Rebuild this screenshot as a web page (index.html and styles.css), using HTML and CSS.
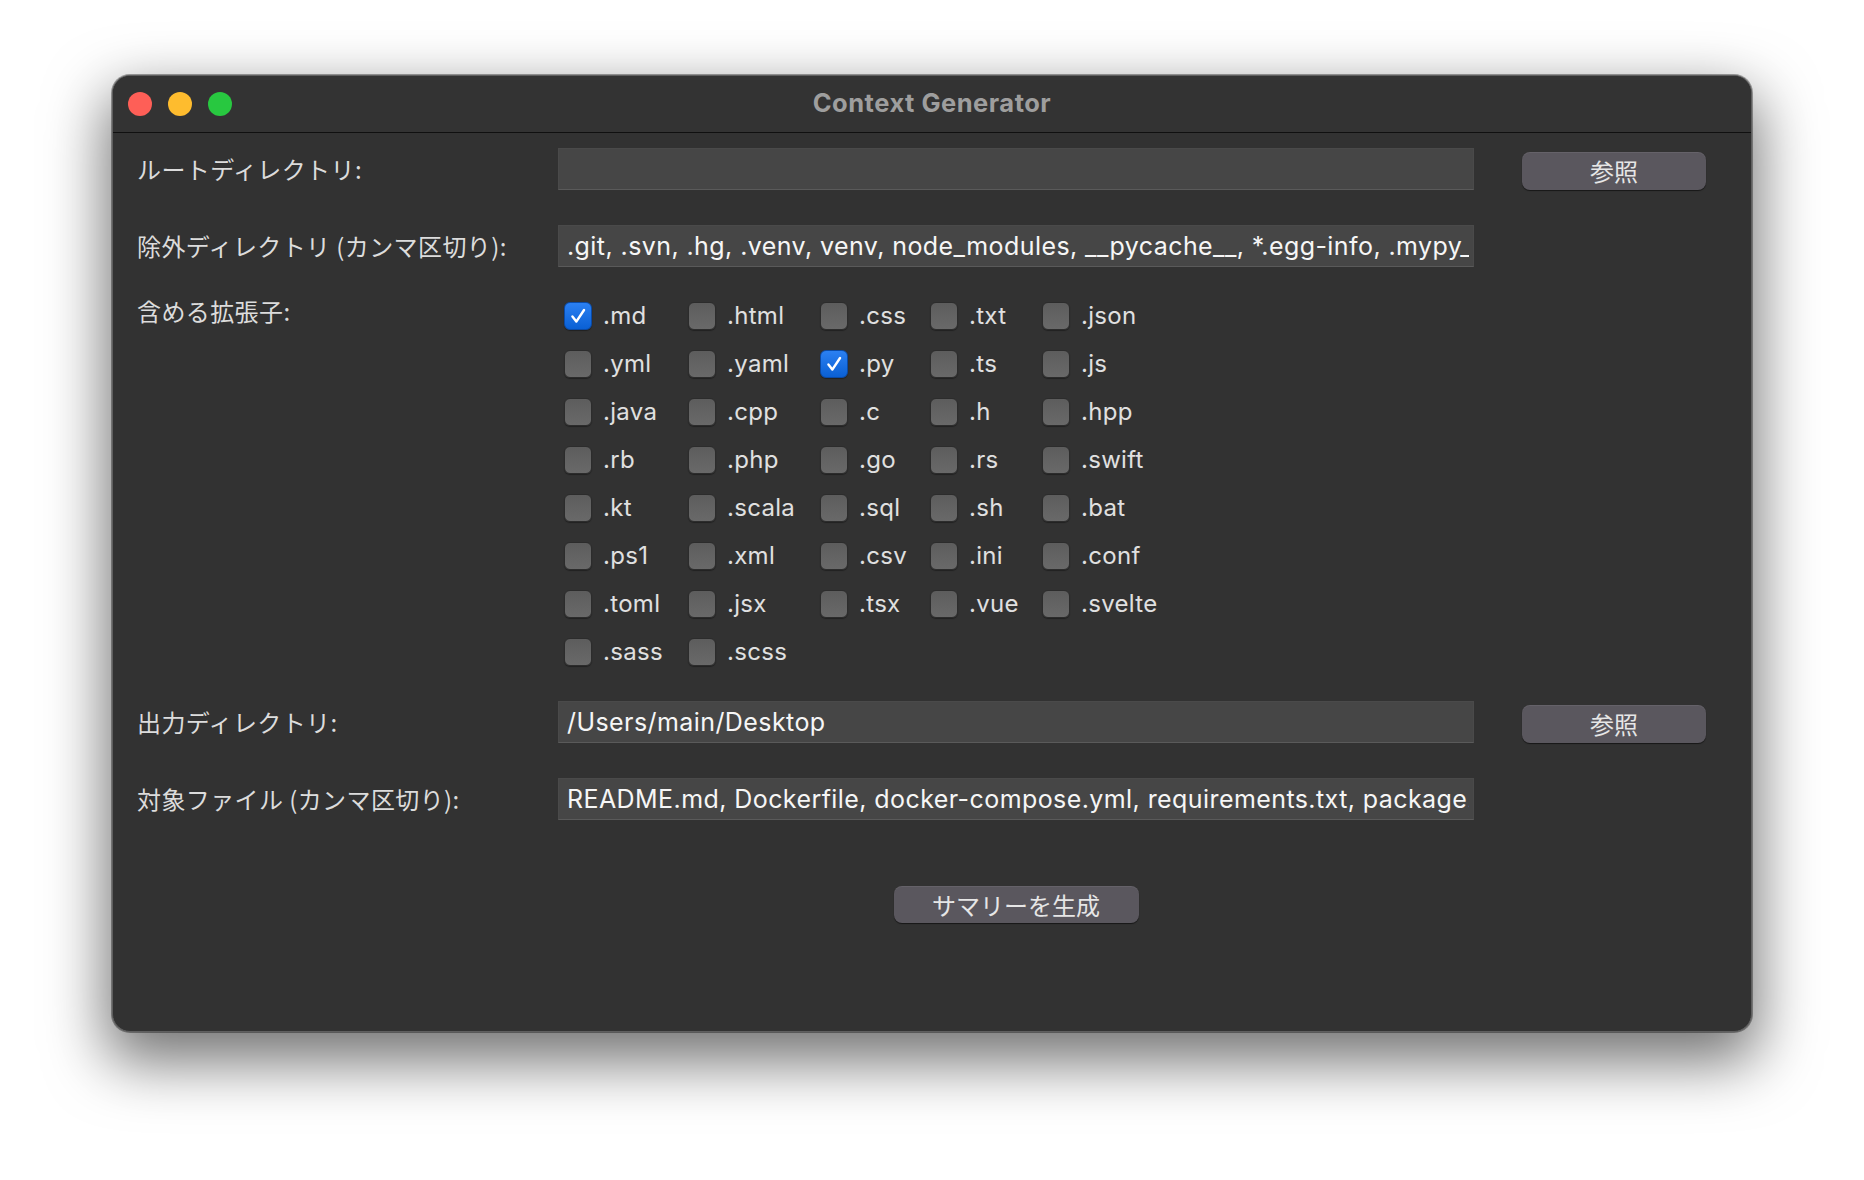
FILE: index.html
```html
<!DOCTYPE html>
<html lang="ja">
<head>
<meta charset="utf-8">
<title>Context Generator</title>
<link rel="stylesheet" href="styles.css">
</head>
<body>
<div class="window">
  <div class="titlebar">
    <div class="lights">
      <span class="light red"></span>
      <span class="light yellow"></span>
      <span class="light green"></span>
    </div>
    <div class="title">Context Generator</div>
    <div></div>
  </div>
  <div class="content">
    <div class="label">ルートディレクトリ:</div>
    <div class="field"><div class="field-text"></div></div>
    <button class="btn browse">参照</button>

    <div class="label">除外ディレクトリ (カンマ区切り):</div>
    <div class="field"><div class="field-text">.git, .svn, .hg, .venv, venv, node_modules, __pycache__, *.egg-info, .mypy_cache, .pytest_cache, dist, build</div></div>
    <div></div>

    <div class="label label-top">含める拡張子:</div>
    <div class="ext-grid">
      <div class="ext"><span class="cb checked"><svg viewBox="0 0 28 28"><path d="M8 14.5 L12.2 20 L20.5 7.5"/></svg></span><span class="ext-name">.md</span></div>
      <div class="ext"><span class="cb"></span><span class="ext-name">.html</span></div>
      <div class="ext"><span class="cb"></span><span class="ext-name">.css</span></div>
      <div class="ext"><span class="cb"></span><span class="ext-name">.txt</span></div>
      <div class="ext"><span class="cb"></span><span class="ext-name">.json</span></div>

      <div class="ext"><span class="cb"></span><span class="ext-name">.yml</span></div>
      <div class="ext"><span class="cb"></span><span class="ext-name">.yaml</span></div>
      <div class="ext"><span class="cb checked"><svg viewBox="0 0 28 28"><path d="M8 14.5 L12.2 20 L20.5 7.5"/></svg></span><span class="ext-name">.py</span></div>
      <div class="ext"><span class="cb"></span><span class="ext-name">.ts</span></div>
      <div class="ext"><span class="cb"></span><span class="ext-name">.js</span></div>

      <div class="ext"><span class="cb"></span><span class="ext-name">.java</span></div>
      <div class="ext"><span class="cb"></span><span class="ext-name">.cpp</span></div>
      <div class="ext"><span class="cb"></span><span class="ext-name">.c</span></div>
      <div class="ext"><span class="cb"></span><span class="ext-name">.h</span></div>
      <div class="ext"><span class="cb"></span><span class="ext-name">.hpp</span></div>

      <div class="ext"><span class="cb"></span><span class="ext-name">.rb</span></div>
      <div class="ext"><span class="cb"></span><span class="ext-name">.php</span></div>
      <div class="ext"><span class="cb"></span><span class="ext-name">.go</span></div>
      <div class="ext"><span class="cb"></span><span class="ext-name">.rs</span></div>
      <div class="ext"><span class="cb"></span><span class="ext-name">.swift</span></div>

      <div class="ext"><span class="cb"></span><span class="ext-name">.kt</span></div>
      <div class="ext"><span class="cb"></span><span class="ext-name">.scala</span></div>
      <div class="ext"><span class="cb"></span><span class="ext-name">.sql</span></div>
      <div class="ext"><span class="cb"></span><span class="ext-name">.sh</span></div>
      <div class="ext"><span class="cb"></span><span class="ext-name">.bat</span></div>

      <div class="ext"><span class="cb"></span><span class="ext-name">.ps1</span></div>
      <div class="ext"><span class="cb"></span><span class="ext-name">.xml</span></div>
      <div class="ext"><span class="cb"></span><span class="ext-name">.csv</span></div>
      <div class="ext"><span class="cb"></span><span class="ext-name">.ini</span></div>
      <div class="ext"><span class="cb"></span><span class="ext-name">.conf</span></div>

      <div class="ext"><span class="cb"></span><span class="ext-name">.toml</span></div>
      <div class="ext"><span class="cb"></span><span class="ext-name">.jsx</span></div>
      <div class="ext"><span class="cb"></span><span class="ext-name">.tsx</span></div>
      <div class="ext"><span class="cb"></span><span class="ext-name">.vue</span></div>
      <div class="ext"><span class="cb"></span><span class="ext-name">.svelte</span></div>

      <div class="ext"><span class="cb"></span><span class="ext-name">.sass</span></div>
      <div class="ext"><span class="cb"></span><span class="ext-name">.scss</span></div>
    </div>
    <div></div>

    <div class="label">出力ディレクトリ:</div>
    <div class="field"><div class="field-text">/Users/main/Desktop</div></div>
    <button class="btn browse">参照</button>

    <div class="label">対象ファイル (カンマ区切り):</div>
    <div class="field"><div class="field-text">README.md, Dockerfile, docker-compose.yml, requirements.txt, package.json, pyproject.toml</div></div>
    <div></div>

    <button class="btn generate">サマリーを生成</button>
  </div>
</div>
</body>
</html>
```

FILE: styles.css
```css
* { box-sizing: border-box; }

html, body {
  margin: 0;
  overflow: hidden;
}

body {
  background: #ffffff;
  padding: 75px 0 0 112px;
  height: 1180px;
}

.window {
  width: 1640px;
  height: 957px;
  background: #323232;
  border: 1px solid #5f5f5f;
  border-radius: 18px;
  overflow: hidden;
  box-shadow: 0 0 0 1px rgba(0, 0, 0, 0.35), 0 24px 60px 6px rgba(0, 0, 0, 0.55);
}

.titlebar {
  height: 57px;
  display: grid;
  grid-template-columns: 1fr auto 1fr;
  align-items: center;
  padding: 0 15px;
  background: #333333;
  border-bottom: 1px solid #101010;
}

.lights {
  display: flex;
  gap: 16px;
}

.light {
  width: 24px;
  height: 24px;
  border-radius: 50%;
  display: block;
}
.red { background: #fe5f57; }
.yellow { background: #febc2e; }
.green { background: #28c840; }

.title {
  font-family: Inter, "Liberation Sans", sans-serif;
  font-weight: 700;
  font-size: 25.5px;
  color: #9e9e9e;
  letter-spacing: 0.5px;
  margin-bottom: 4px;
}

.content {
  display: grid;
  grid-template-columns: 421px 916px 232px;
  row-gap: 35px;
  padding: 15px 0 0 24px;
}

.label {
  font-family: "Noto Sans CJK JP", sans-serif;
  font-size: 24px;
  line-height: 28px;
  color: #dcdcdc;
  align-self: center;
  white-space: nowrap;
  letter-spacing: 0.4px;
  margin-top: -1px;
}

.label-top {
  align-self: start;
  margin-top: -5px;
}

.field {
  height: 42px;
  background: #464646;
  border: 1px solid #4a4a4a;
  border-bottom-color: #5a5a5a;
  padding: 0 4px 0 8px;
}

.field-text {
  overflow: hidden;
  white-space: nowrap;
  font-family: Inter, "Liberation Sans", sans-serif;
  font-size: 25px;
  letter-spacing: 0.42px;
  line-height: 40px;
  color: #f6f6f6;
}

.btn {
  font-family: "Noto Sans CJK JP", sans-serif;
  font-size: 24px;
  color: #e6e6e6;
  background: #5a575e;
  border: none;
  border-radius: 8px;
  box-shadow: 0 1px 1px rgba(0, 0, 0, 0.55), inset 0 1px 0 rgba(255, 255, 255, 0.07);
  padding: 0;
  line-height: 1;
}

.browse {
  width: 184px;
  height: 38px;
  justify-self: end;
  align-self: start;
  margin-top: 4px;
}

.generate {
  grid-column: 2;
  justify-self: center;
  width: 245px;
  height: 37px;
  margin-top: 31px;
}

.ext-grid {
  display: grid;
  grid-template-columns: 124px 132px 110px 112px auto;
  row-gap: 20px;
  padding-left: 6px;
}

.ext {
  display: flex;
  align-items: center;
  gap: 11px;
  height: 28px;
}

.cb {
  width: 28px;
  height: 28px;
  flex: none;
  border-radius: 6px;
  background: linear-gradient(180deg, #5d5d5d, #696969);
  border: 1px solid #2c2c2c;
  box-shadow: 0 1px 1px rgba(0, 0, 0, 0.35);
  display: block;
}

.cb.checked {
  background: linear-gradient(180deg, #2b80f2, #0a60d4);
  border-color: #0a4aa6;
}

.cb svg {
  width: 26px;
  height: 26px;
  display: block;
}

.cb path {
  fill: none;
  stroke: #ffffff;
  stroke-width: 2.6;
  stroke-linecap: round;
  stroke-linejoin: round;
}

.ext-name {
  font-family: Inter, "Liberation Sans", sans-serif;
  font-size: 24px;
  letter-spacing: 0.3px;
  line-height: 28px;
  color: #e0e0e0;
}
```
